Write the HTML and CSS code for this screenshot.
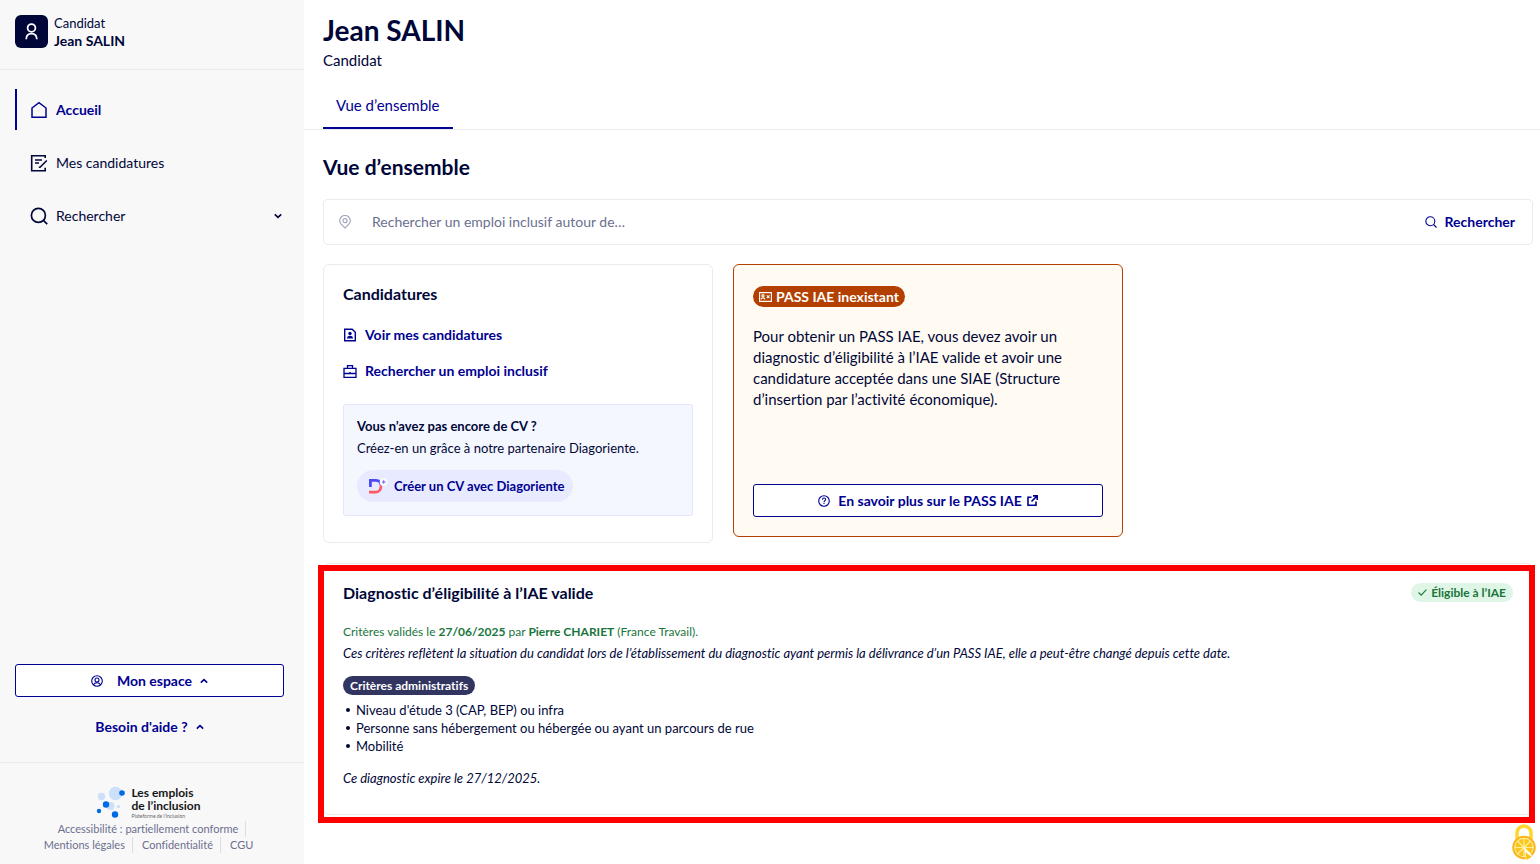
FILE: index.html
```html
<!DOCTYPE html>
<html lang="fr">
<head>
<meta charset="utf-8">
<meta name="viewport" content="width=device-width, initial-scale=1">
<title>Jean SALIN - Les emplois de l’inclusion</title>
<link rel="stylesheet" href="styles.css">
</head>
<body>
<div class="app">
  <aside class="sidebar">
    <header class="profile">
      <span class="avatar">
        <svg width="17" height="17" viewBox="0 0 24 24" fill="none" stroke="currentColor" stroke-width="2.5"><circle cx="12" cy="7" r="5.5"/><path d="M4.500 23c0-5 3-8 7.500-8s7.500 3 7.500 8"/></svg>
      </span>
      <div class="profile-text">
        <span>Candidat</span>
        <strong>Jean SALIN</strong>
      </div>
    </header>
    <nav class="nav">
      <a class="nav-item active" href="#">
        <svg width="18" height="18" viewBox="0 0 18 18" fill="none" stroke="currentColor" stroke-width="1.500"><path d="M2 7 9 1.700 16 7v9.200H2z"/></svg>
        Accueil
      </a>
      <a class="nav-item" href="#">
        <svg width="18" height="18" viewBox="0 0 18 18" fill="none" stroke="currentColor" stroke-width="1.600"><path d="M15.200 4V1.700H1.700v15h13.500v-3M5 6h7M5 9h4M16.800 6.500 10 13.300H8.800"/></svg>
        Mes candidatures
      </a>
      <a class="nav-item" href="#">
        <svg width="18" height="18" viewBox="0 0 18 18" fill="none" stroke="currentColor" stroke-width="1.700"><circle cx="8.400" cy="8.400" r="7"/><path d="m13.400 13.400 3.800 3.800"/></svg>
        Rechercher
        <svg class="nav-caret" width="8" height="6" viewBox="0 0 8 6" fill="none" stroke="currentColor" stroke-width="1.700"><path d="m.8 1.300 3.200 3 3.200-3"/></svg>
      </a>
    </nav>
    <div class="account">
      <button class="btn-outline" type="button">
        <svg class="account-icon" width="12" height="12" viewBox="0 0 12 12" fill="none" stroke="currentColor" stroke-width="1.100"><circle cx="6" cy="6" r="5.300"/><circle cx="6" cy="5" r="2"/><path d="M2.400 9.700c1.600-2.600 5.600-2.600 7.200 0"/></svg>
        Mon espace
        <svg width="8" height="6" viewBox="0 0 8 6" fill="none" stroke="currentColor" stroke-width="1.600"><path d="m.8 4.700 3.200-3 3.200 3"/></svg>
      </button>
      <button class="btn-text" type="button">
        Besoin d'aide ?
        <svg width="8" height="6" viewBox="0 0 8 6" fill="none" stroke="currentColor" stroke-width="1.600"><path d="m.8 4.700 3.200-3 3.200 3"/></svg>
      </button>
    </div>
    <footer class="footer">
      <div class="brand">
        <svg width="29" height="32" viewBox="0 0 29 32"><g fill="#cce0f9"><circle cx="19.500" cy="7.500" r="6.700"/><circle cx="5.500" cy="10.500" r="3.700"/><circle cx="14.500" cy="20" r="4"/><circle cx="22.500" cy="20.500" r="1.700"/></g><g fill="#006be6"><circle cx="26" cy="7" r="2.800"/><circle cx="10" cy="18.500" r="3.200"/><circle cx="3" cy="25" r="2.200"/><circle cx="19" cy="28.500" r="3.200"/></g></svg>
        <div class="brand-text">
          <strong>Les emplois</strong>
          <strong>de l’inclusion</strong>
          <small>Plateforme de l’inclusion</small>
        </div>
      </div>
      <ul class="legal">
        <li><a href="#">Accessibilité : partiellement conforme</a></li>
        <li><a href="#">Mentions légales</a></li>
        <li><a href="#">Confidentialité</a></li>
        <li><a href="#">CGU</a></li>
      </ul>
    </footer>
  </aside>

  <main class="main">
    <div class="title">
      <h1>Jean SALIN</h1>
      <p>Candidat</p>
    </div>
    <nav class="tabs"><a class="tab" href="#">Vue d’ensemble</a></nav>
    <div class="content">
      <h2>Vue d’ensemble</h2>
      <form class="search">
        <label class="search-pin" for="place" aria-label="Lieu">
          <svg width="12" height="14" viewBox="0 0 12 14" fill="none" stroke="currentColor" stroke-width="1.200"><path d="M6 13C3.500 10.500.7 8.500.7 5.700a5.300 5.200 0 0 1 10.600 0C11.300 8.500 8.500 10.500 6 13z"/><circle cx="6" cy="5.700" r="2"/></svg>
        </label>
        <input id="place" type="text" placeholder="Rechercher un emploi inclusif autour de…">
        <button class="search-btn" type="submit">
          <svg width="12" height="12" viewBox="0 0 12 12" fill="none" stroke="currentColor" stroke-width="1.100"><circle cx="5.300" cy="5.300" r="4.500"/><path d="m8.500 8.500 3 3"/></svg>
          Rechercher
        </button>
      </form>

      <div class="cards">
        <section class="card">
          <h3>Candidatures</h3>
          <a class="card-link" href="#">
            <svg width="14" height="14" viewBox="0 0 14 14" fill="none" stroke="currentColor" stroke-width="1.400"><path d="M1.700 1.200h7.500l3.100 3v8.600H1.700z"/><path d="M4 10.500c0-2.200 1.400-2.800 3-2.800s3 .6 3 2.800z" fill="currentColor" stroke="none"/><circle cx="7" cy="5.500" r="1.700" fill="currentColor" stroke="none"/></svg>
            Voir mes candidatures
          </a>
          <a class="card-link" href="#">
            <svg width="14" height="14" viewBox="0 0 14 14" fill="none" stroke="currentColor" stroke-width="1.300"><path d="M1 4.300h12v9H1zM4.500 4V1.700h5V4M1 9.500h12M7 8v1.500"/></svg>
            Rechercher un emploi inclusif
          </a>
          <div class="cv">
            <strong>Vous n’avez pas encore de CV ?</strong>
            <p>Créez-en un grâce à notre partenaire Diagoriente.</p>
            <a class="cv-btn" href="#">
              <svg width="20" height="18" viewBox="0 0 20 18"><g fill="none" stroke-width="2.800"><path d="M2.400 10V3.400H8c3 0 5 2 5 5" stroke="#4b49f5"/><path d="M13 8.400c0 4-2 6.700-5 6.700H1" stroke="#ff5a5f"/></g><circle cx="15.700" cy="5" r="4" fill="#f8f9ff"/><path d="M15.700 3.300v3.400M14 5h3.400" stroke="#6563f5" stroke-width="1"/></svg>
              Créer un CV avec Diagoriente
            </a>
          </div>
        </section>

        <section class="card card-warning">
          <span class="badge badge-warning">
            <svg width="13" height="10" viewBox="0 0 13 10" fill="none" stroke="currentColor" stroke-width="1.100"><path d="M.6.600h11.800v8.800H.6z"/><circle cx="4" cy="3.700" r="1.100"/><path d="M2 7.300c.5-1.900 3.500-1.900 4 0M7.700 3.300l2.800 2.800M10.500 3.300 7.700 6.100"/></svg>
            PASS IAE inexistant
          </span>
          <p>Pour obtenir un PASS IAE, vous devez avoir un diagnostic d’éligibilité à l’IAE valide et avoir une candidature acceptée dans une SIAE (Structure d’insertion par l’activité économique).</p>
          <a class="btn-outline pass-btn" href="#">
            <svg width="12" height="12" viewBox="0 0 12 12" fill="none" stroke="currentColor" stroke-width="1.100"><circle cx="6" cy="6" r="5.300"/><path d="M4.500 4.800C4.500 2.500 7.600 2.600 7.600 4.500 7.600 5.800 6 5.700 6 7.200M6 8v1.100"/></svg>
            <span>En savoir plus sur le PASS IAE</span>
            <svg class="external" width="11" height="11" viewBox="0 0 11 11" fill="none" stroke="currentColor" stroke-width="1.600"><path d="M4.500 2.200H1v8h8V6.500M6 .9h4.200v4.200M10 1 4.500 6.500"/></svg>
          </a>
        </section>
      </div>

      <div class="highlight">
        <section class="card diagnostic">
          <div class="diagnostic-head">
            <h3>Diagnostic d’éligibilité à l’IAE valide</h3>
            <span class="badge badge-success">
              <svg width="9" height="7" viewBox="0 0 9 7" fill="none" stroke="currentColor" stroke-width="1.100"><path d="m.6 3.500 2.600 2.600L8.400.7"/></svg>
              Éligible à l’IAE
            </span>
          </div>
          <p class="validated">Critères validés le <strong>27/06/2025</strong> par <strong>Pierre CHARIET</strong> (France Travail).</p>
          <p class="note">Ces critères reflètent la situation du candidat lors de l’établissement du diagnostic ayant permis la délivrance d’un PASS IAE, elle a peut-être changé depuis cette date.</p>
          <span class="badge badge-dark">Critères administratifs</span>
          <ul class="criteria">
            <li>Niveau d'étude 3 (CAP, BEP) ou infra</li>
            <li>Personne sans hébergement ou hébergée ou ayant un parcours de rue</li>
            <li>Mobilité</li>
          </ul>
          <p class="note">Ce diagnostic expire le 27/12/2025.</p>
        </section>
      </div>
    </div>
  </main>
</div>
<button class="cookies" type="button" aria-label="Gestion des cookies">
  <svg width="26" height="40" viewBox="0 0 26 40"><path d="M6 18V9a7 7 0 0 1 14 0v9" fill="none" stroke="#ffd52e" stroke-width="3.500"/><circle cx="13" cy="23.500" r="11.700" fill="#f9b51b"/><circle cx="13" cy="23.500" r="9.700" fill="#fff3b0"/><circle cx="13" cy="23.500" r="8.800" fill="#fac51c"/><path d="M13 14v19M4 23.500h18M6.500 17l13 13M19.500 17l-13 13" stroke="#fff0a0" stroke-width="1.100"/><path d="m13 23.500 2 12 6-4z" fill="#fff"/><path d="m14.500 28 1 8 5-3z" fill="#f9c21b"/></svg>
</button>
</body>
</html>
```
FILE: styles.css
```css
* { box-sizing: border-box; }

:root {
  --ink: #000638;
  --primary: #000091;
  --line: #ebebeb;
  --muted: #6b6f8f;
}

body {
  margin: 0;
  color: var(--ink);
  background: #fff;
  font: 14px/20px Lato, "Open Sans", sans-serif;
  font-variant-ligatures: none;
}

h1, h2, h3, p, ul { margin: 0; padding: 0; }
ul { list-style: none; }
a { color: inherit; text-decoration: none; }
button, input { font: inherit; color: inherit; }
button { cursor: pointer; }
svg { flex: none; display: block; }

.app { display: flex; min-height: 100vh; }

.sidebar {
  display: flex;
  flex: none;
  flex-direction: column;
  width: 304px;
  background: #f8f8f8;
}

.profile {
  display: flex;
  gap: 6px;
  height: 70px;
  padding: 15px;
  border-bottom: 1px solid var(--line);
}
.avatar {
  display: grid;
  place-items: center;
  width: 33px;
  height: 33px;
  border-radius: 6px;
  background: var(--ink);
  color: #fff;
}
.profile-text {
  display: flex;
  flex-direction: column;
  font-size: 13px;
  line-height: 17px;
}
.profile-text strong { font-size: 14px; }

.nav {
  display: flex;
  flex-direction: column;
  gap: 12px;
  padding: 19px 20px 0 15px;
}
.nav-item {
  display: flex;
  align-items: center;
  gap: 8px;
  height: 41px;
  padding-left: 13px;
  border-left: 2px solid transparent;
}
.nav-item.active {
  border-color: var(--primary);
  color: var(--primary);
  font-weight: 700;
}
.nav-caret { margin: 0 2px 0 auto; }

.account {
  display: flex;
  flex-direction: column;
  gap: 13px;
  margin-top: auto;
  padding: 0 20px 19px 15px;
}
.btn-outline, .btn-text {
  display: flex;
  align-items: center;
  justify-content: center;
  gap: 8px;
  height: 33px;
  border: 1px solid transparent;
  border-radius: 3px;
  background: none;
  color: var(--primary);
  font-weight: 700;
}
.btn-outline { border-color: var(--primary); background: #fff; }
.account-icon { margin-right: 6px; }

.footer {
  padding: 23px 22px 11px 15px;
  border-top: 1px solid var(--line);
}
.brand {
  display: flex;
  justify-content: center;
  gap: 6px;
  color: #161616;
}
.brand-text {
  display: flex;
  flex-direction: column;
  font-size: 12px;
  line-height: 13px;
}
.brand-text small { font-size: 5px; line-height: 8px; color: #666; }
.legal {
  display: flex;
  flex-wrap: wrap;
  justify-content: center;
  padding: 1px 20px 0 18px;
  color: var(--muted);
  font-size: 11px;
  line-height: 16px;
}
.legal li { padding: 0 7px 0 9px; border-right: 1px solid #dedede; }
.legal li:last-child { border: 0; }

.main { flex: 1; min-width: 0; }
.title { padding: 12px 19px 0; font-size: 15px; }
.title p { margin-top: 2px; }
h1 { font-size: 28px; line-height: 36px; }
h2 { font-size: 21px; line-height: 28px; }
h3 { font-size: 16px; line-height: 20px; }

.tabs {
  display: flex;
  margin-top: 12px;
  padding-left: 19px;
  border-bottom: 1px solid var(--line);
}
.tab {
  height: 47px;
  padding: 13px 13px 0;
  border-bottom: 2px solid var(--primary);
  color: var(--primary);
  font-size: 15px;
}

.content {
  display: flex;
  flex-direction: column;
  padding: 23px 7px 0 19px;
}

.search {
  display: flex;
  align-items: center;
  height: 46px;
  margin: 18px 0 19px;
  padding: 0 17px 0 15px;
  border: 1px solid var(--line);
  border-radius: 5px;
}
.search-pin { width: 33px; color: #a4a6bd; }
.search input {
  flex: 1;
  min-width: 0;
  padding: 0;
  border: 0;
  outline: 0;
  background: none;
}
.search input::placeholder { color: var(--muted); opacity: 1; }
.search-btn {
  display: flex;
  align-items: center;
  gap: 8px;
  padding: 0;
  border: 0;
  background: none;
  color: var(--primary);
  font-weight: 700;
}

.cards {
  display: grid;
  grid-template-columns: repeat(3, 1fr);
  gap: 20px;
}
.card {
  display: flex;
  flex-direction: column;
  align-items: flex-start;
  padding: 19px;
  border: 1px solid var(--line);
  border-radius: 6px;
}
.card-link {
  display: flex;
  align-items: center;
  gap: 8px;
  margin-top: 16px;
  color: var(--primary);
  font-weight: 700;
}
.card h3 + .card-link { margin-top: 21px; }
.cv {
  align-self: stretch;
  margin: 23px 0 7px;
  padding: 11px 13px 13px;
  border: 1px solid #e3e6fd;
  border-radius: 3px;
  background: #f5f7ff;
  font-size: 13px;
}
.cv p { margin-top: 2px; }
.cv-btn {
  display: inline-flex;
  align-items: center;
  gap: 6px;
  height: 32px;
  margin-top: 12px;
  padding: 0 9px 0 11px;
  border-radius: 16px;
  background: #e8ebff;
  color: var(--primary);
  font-size: 13px;
  font-weight: 700;
}

.badge {
  display: inline-flex;
  align-items: center;
  gap: 4px;
  height: 19px;
  padding: 0 7px;
  border-radius: 11px;
  font-size: 12px;
  font-weight: 700;
  white-space: nowrap;
}
.card-warning {
  margin-bottom: 6px;
  border-color: #b34000;
  background: #fffaf2;
}
.card-warning p {
  margin-top: 19px;
  padding-right: 20px;
  font-size: 15px;
  line-height: 21px;
}
.badge-warning {
  height: 21px;
  margin-top: 2px;
  padding: 0 6px;
  background: #b34000;
  color: #fff;
  font-size: 14px;
}
.pass-btn { align-self: stretch; margin-top: auto; }
.external { margin-left: -3px; }

.highlight {
  position: relative;
  margin-top: 20px;
}
/* Red frame drawn over the card edges */
.highlight::after {
  position: absolute;
  inset: 2px -2px -8px -5px;
  border: 6px solid #f00;
  content: "";
  pointer-events: none;
}
.diagnostic { font-size: 13px; }
.diagnostic-head {
  display: flex;
  align-self: stretch;
  justify-content: space-between;
}
.badge-success { background: #dff6e6; color: #18753c; }
.badge-dark { margin-top: 13px; background: #31355f; color: #fff; }
.validated { margin-top: 19px; color: #18753c; font-size: 12px; }
.note { margin-top: 1px; font-style: italic; }
.criteria {
  margin: 6px 0 12px;
  line-height: 18px;
}
.criteria li { display: flex; align-items: center; gap: 6px; }
.criteria li::before {
  width: 4px;
  height: 4px;
  margin-left: 3px;
  border-radius: 50%;
  background: currentColor;
  content: "";
}
.diagnostic .note:last-child { margin-bottom: 7px; }

.cookies {
  position: fixed;
  right: 3px;
  bottom: 0;
  padding: 0;
  border: 0;
  background: none;
}
```
